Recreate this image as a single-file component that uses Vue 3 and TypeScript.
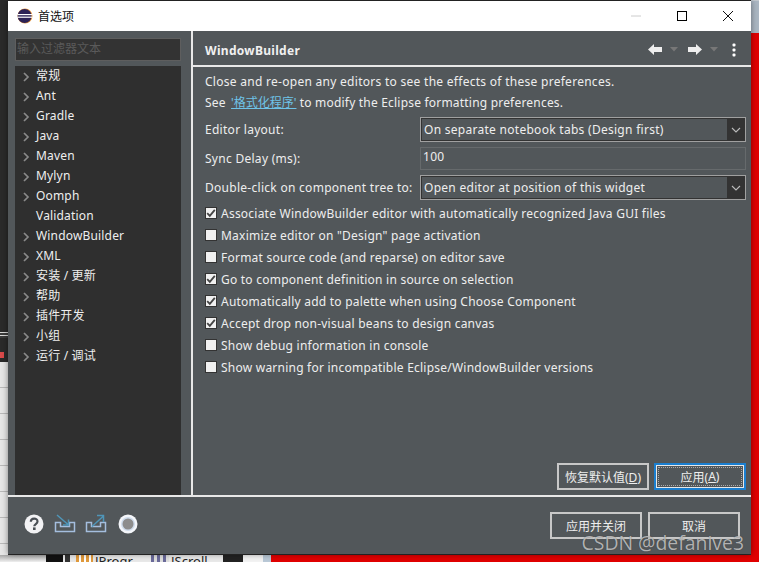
<script setup lang="ts">
const tree: { label: string; arrow: boolean }[] = [
  { label: '常规', arrow: true },
  { label: 'Ant', arrow: true },
  { label: 'Gradle', arrow: true },
  { label: 'Java', arrow: true },
  { label: 'Maven', arrow: true },
  { label: 'Mylyn', arrow: true },
  { label: 'Oomph', arrow: true },
  { label: 'Validation', arrow: false },
  { label: 'WindowBuilder', arrow: true },
  { label: 'XML', arrow: true },
  { label: '安装 / 更新', arrow: true },
  { label: '帮助', arrow: true },
  { label: '插件开发', arrow: true },
  { label: '小组', arrow: true },
  { label: '运行 / 调试', arrow: true },
]
const checks: { label: string; on: boolean }[] = [
  { label: 'Associate WindowBuilder editor with automatically recognized Java GUI files', on: true },
  { label: 'Maximize editor on "Design" page activation', on: false },
  { label: 'Format source code (and reparse) on editor save', on: false },
  { label: 'Go to component definition in source on selection', on: true },
  { label: 'Automatically add to palette when using Choose Component', on: true },
  { label: 'Accept drop non-visual beans to design canvas', on: true },
  { label: 'Show debug information in console', on: false },
  { label: 'Show warning for incompatible Eclipse/WindowBuilder versions', on: false },
]
</script>

<template>
  <div class="desktop">
    <div class="bg-left">
      <div class="bg-dark"></div>
      <div class="bg-rule"></div>
      <div class="bg-rule"></div>
      <div class="bg-dark2"><span class="bg-red"></span></div>
      <div class="bg-list"></div>
    </div>
    <div class="bg-right"></div>
    <div class="bg-bottom">
      <span class="bb-a"></span>
      <span class="bb-b"></span>
      <span class="bb-c"></span>
      <span class="bb-ic orange"></span>
      <span class="bb-t">JProgr</span>
      <span class="bb-ic slate"></span>
      <span class="bb-t second">JScroll</span>
      <span class="bb-d"></span>
      <span class="bb-e"></span>
      <span class="bb-f"></span>
      <span class="bb-red"></span>
    </div>

    <section class="dialog">
      <header class="titlebar">
        <svg class="logo" width="16" height="16" viewBox="0 0 16 16">
          <circle cx="8" cy="8" r="7.5" fill="#e8963c" />
          <circle cx="7.6" cy="8" r="7" fill="#2c2255" />
          <rect x="0.5" y="6" width="15" height="1.2" fill="#fff" />
          <rect x="0.5" y="8.6" width="15" height="1.2" fill="#fff" />
        </svg>
        <span class="title">首选项</span>
        <div class="winbtns">
          <svg width="46" height="30" viewBox="0 0 46 30"><path d="M18 15h10" stroke="#ccc" /></svg>
          <svg width="46" height="30" viewBox="0 0 46 30"><rect x="18.5" y="10.5" width="9" height="9" fill="none" stroke="#000" /></svg>
          <svg width="46" height="30" viewBox="0 0 46 30"><path d="M18 10l10 10M28 10l-10 10" stroke="#111" fill="none" /></svg>
        </div>
      </header>

      <div class="body">
        <aside class="side">
          <div class="filter">输入过滤器文本</div>
          <ul class="tree">
            <li v-for="t in tree" :key="t.label" class="node">
              <svg v-if="t.arrow" class="chev" width="8" height="10" viewBox="0 0 8 10">
                <path d="M2 1l4 4-4 4" fill="none" stroke="#8a8a8a" stroke-width="1.7" />
              </svg>
              <span class="node-label">{{ t.label }}</span>
            </li>
          </ul>
        </aside>

        <main class="main">
          <div class="head">
            <h1 class="heading">WindowBuilder</h1>
            <div class="nav">
              <svg width="14" height="11" viewBox="0 0 14 11"><path d="M0 5.500L6 0V3H14V8H6V11z" fill="#eee" /></svg>
              <svg class="caret" width="8" height="5" viewBox="0 0 8 5"><path d="M0 0h8L4 4.500z" fill="#777" /></svg>
              <svg class="fwd" width="14" height="11" viewBox="0 0 14 11"><path d="M14 5.500L8 0V3H0V8H8V11z" fill="#eee" /></svg>
              <svg class="caret" width="8" height="5" viewBox="0 0 8 5"><path d="M0 0h8L4 4.500z" fill="#777" /></svg>
              <svg class="dots" width="4" height="14" viewBox="0 0 4 14">
                <rect x="0.500" y="0.500" width="3" height="3" rx="1" fill="#fff" />
                <rect x="0.500" y="5.500" width="3" height="3" rx="1" fill="#fff" />
                <rect x="0.500" y="10.500" width="3" height="3" rx="1" fill="#fff" />
              </svg>
            </div>
          </div>

          <div class="content">
            <p class="line">Close and re-open any editors to see the effects of these preferences.</p>
            <p class="line l2">See <a class="link">'格式化程序'</a> to modify the Eclipse formatting preferences.</p>

            <div class="form">
              <label class="flabel">Editor layout:</label>
              <div class="combo"><span class="combo-text">On separate notebook tabs (Design first)</span><span class="combo-btn"><svg width="10" height="6" viewBox="0 0 10 6"><path d="M1 1l4 4 4-4" fill="none" stroke="#bbb" stroke-width="1.100" /></svg></span></div>
              <label class="flabel short">Sync Delay (ms):</label>
              <div class="field">100</div>
              <label class="flabel">Double-click on component tree to:</label>
              <div class="combo"><span class="combo-text">Open editor at position of this widget</span><span class="combo-btn"><svg width="10" height="6" viewBox="0 0 10 6"><path d="M1 1l4 4 4-4" fill="none" stroke="#bbb" stroke-width="1.100" /></svg></span></div>
            </div>

            <ul class="checks">
              <li v-for="c in checks" :key="c.label" class="check">
                <span class="box">
                  <svg v-if="c.on" width="12" height="12" viewBox="0 0 12 12"><path d="M2.200 6.200l2.600 2.600 5-6" fill="none" stroke="#444" stroke-width="1.800" /></svg>
                </span>
                <span>{{ c.label }}</span>
              </li>
            </ul>

            <div class="actions">
              <button class="btn">恢复默认值(<u>D</u>)</button>
              <button class="btn primary"><span class="focus">应用(<u>A</u>)</span></button>
            </div>
          </div>
        </main>
      </div>

      <footer class="footer">
        <div class="tools">
          <svg width="20" height="20" viewBox="0 0 20 20">
            <circle cx="10" cy="10" r="9.500" fill="#f2f2f4" />
            <path d="M6.800 7.800c0-4.300 6.700-4.300 6.700-.3 0 2.600-3.200 2.500-3.200 4.700" fill="none" stroke="#4a4f55" stroke-width="2.200" />
            <rect x="9" y="13.400" width="2.600" height="2.600" fill="#4a4f55" />
          </svg>
          <svg class="imp" width="22" height="20" viewBox="0 0 22 20">
            <path d="M1.500 8.500v9h19v-9h-5v4h-9v-4z" fill="none" stroke="#a5bede" stroke-width="1.500" />
            <path d="M3 1l11 9.500M14.500 5.500v5.500H9" fill="none" stroke="#4f95b8" stroke-width="1.500" />
          </svg>
          <svg class="exp" width="22" height="20" viewBox="0 0 22 20">
            <path d="M1.500 8.500v9h19v-9h-5v4h-9v-4z" fill="none" stroke="#a5bede" stroke-width="1.500" />
            <path d="M7 12.500L18 2.500M12 1.500h6.500V8" fill="none" stroke="#4f95b8" stroke-width="1.500" />
          </svg>
          <svg class="rec" width="20" height="20" viewBox="0 0 20 20">
            <circle cx="10" cy="10" r="9.500" fill="#f4f6fa" />
            <circle cx="10" cy="10" r="7" fill="#cfdcec" />
            <circle cx="10" cy="10" r="5.500" fill="#8d8d8d" />
          </svg>
        </div>
        <div class="foot-btns">
          <button class="btn">应用并关闭</button>
          <button class="btn">取消</button>
        </div>
      </footer>
    </section>

    <div class="mark">CSDN @defanive3</div>
  </div>
</template>

<style>
html, body { margin: 0; padding: 0; overflow: hidden; }
</style>

<style scoped>
* { box-sizing: border-box; }
.desktop {
  position: relative;
  width: 759px;
  height: 562px;
  overflow: hidden;
  background: #2b2b2b;
  font-family: "Noto Sans", "Noto Sans CJK SC", sans-serif;
  font-size: 12px;
  color: #eeeeee;
}
.bg-left { position: absolute; left: 0; top: 0; width: 8px; height: 555px; display: flex; flex-direction: column; }
.bg-dark { height: 332px; background: #2a2a2a; }
.bg-rule { height: 3px; border-top: 1px solid #d8d8d8; background: #3a3a3a; }
.bg-dark2 { height: 24px; background: #2a2a2a; position: relative; }
.bg-red { position: absolute; left: 0; top: 14px; width: 4px; height: 6px; background: #d94a4a; }
.bg-list {
  flex: 1;
  background: repeating-linear-gradient(#e6e6e6 0, #e6e6e6 25px, #b9b9b9 25px, #b9b9b9 26px);
}
.bg-right {
  position: absolute; right: 0; top: 0; width: 8px; height: 555px;
  background: linear-gradient(#dcdcdc 0, #aab6c2 1px, #aab6c2 33px, #e00000 33px);
}
.bg-bottom {
  position: absolute; left: 0; right: 0; bottom: 0; height: 7px;
  display: flex; align-items: flex-start; background: #e8e8e8;
  color: #222; font-size: 13px; line-height: 14px; overflow: hidden;
}
.bb-a { width: 46px; height: 7px; background: linear-gradient(#a8a8a8, #efefef); }
.bb-b { width: 17px; height: 7px; background: #111; }
.bb-c { width: 5px; height: 7px; margin-left: 2px; background: #333; }
.bb-ic { width: 17px; height: 7px; margin-left: 6px; flex: none; }
.orange { background: repeating-linear-gradient(90deg, #e09a3c 0, #e09a3c 3px, #fff 3px, #fff 5px); }
.slate { width: 18px; margin-left: 20px; background: repeating-linear-gradient(90deg, #6a6a9a 0, #6a6a9a 3px, #ddd 3px, #ddd 6px); }
.bb-t { margin-top: -1px; margin-left: 2px; width: 36px; }
.bb-t.second { width: 36px; }
.bb-d { width: 20px; height: 7px; margin-left: 16px; background: #222; }
.bb-e { width: 20px; height: 7px; background: #f2f2f2; }
.bb-f { width: 8px; height: 7px; background: #b9c8d6; }
.bb-red { flex: 1; height: 7px; background: #e00000; }

.dialog {
  position: absolute; left: 8px; top: 1px; width: 743px; height: 553px;
  display: flex; flex-direction: column; background: #52575a;
  box-shadow: 0 0 6px rgba(0, 0, 0, 0.45);
}
.titlebar {
  height: 30px; flex: none; background: #fff; display: flex; align-items: center;
  padding-left: 9px; color: #111;
}
.logo { flex: none; }
.title { margin-left: 5px; font-size: 12px; }
.winbtns { margin-left: auto; display: flex; }
.winbtns svg { display: block; }

.body { flex: 1; display: flex; min-height: 0; border-bottom: 2px solid #e8e8e8; }
.side { width: 185px; flex: none; padding: 7px 0 0 7px; border-right: 2px solid #e8e8e8; display: flex; flex-direction: column; }
.filter {
  width: 166px; height: 23px; background: #333; border: 1px solid #5e5e5e;
  color: #5a5a5a; line-height: 20px; padding-left: 1px; flex: none;
}
.tree { list-style: none; margin: 5px 0 0; padding: 0; width: 166px; flex: 1; background: #2f2f2f; letter-spacing: 0.17px; }
.node { height: 20px; position: relative; padding-left: 21px; line-height: 20px; }
.chev { position: absolute; left: 7px; top: 6px; }

.main { flex: 1; min-width: 0; display: flex; flex-direction: column; }
.head { height: 36px; flex: none; display: flex; align-items: center; padding: 3px 15px 0 12px; border-bottom: 2px solid #e8e8e8; }
.heading { margin: 2px 0 0; font-size: 12px; font-weight: 700; color: #f0f0f0; letter-spacing: 0.3px; }
.nav { margin-left: auto; display: flex; align-items: center; }
.caret { margin-left: 8px; }
.fwd { margin-left: 10px; }
.dots { margin-left: 14px; }

.content { flex: 1; display: flex; flex-direction: column; padding: 4px 5px 5px 12px; position: relative; letter-spacing: 0.28px; }
.line { margin: 0; height: 22px; line-height: 22px; white-space: nowrap; }
.l2 { height: 20px; line-height: 20px; letter-spacing: 0.2px; }
.link { color: #6fc3e8; text-decoration: underline; letter-spacing: 0; margin-left: 2px; }
.form { display: grid; grid-template-columns: 215px 326px; grid-template-rows: 25px 23px 25px; row-gap: 5px; margin-top: 4px; }
.form .flabel { line-height: 25px; white-space: nowrap; }
.form .short { line-height: 23px; }
.combo { display: flex; border: 1px solid #a0a0a0; background: #52575a; box-shadow: inset 0 0 0 1px #333; }
.combo-text { flex: 1; padding-left: 3px; line-height: 23px; }
.combo-btn { width: 18px; background: #333; display: flex; align-items: center; justify-content: center; }
.field { border: 1px solid #666a6c; padding-left: 2px; line-height: 18px; background: #52575a; }
.checks { list-style: none; margin: 2px 0 0; padding: 0; letter-spacing: 0.23px; }
.check { height: 22px; display: flex; align-items: center; gap: 4px; white-space: nowrap; }
.box { width: 12px; height: 12px; flex: none; background: #f0f0f0; border: 1px solid #333; display: flex; align-items: center; justify-content: center; }
.box svg { margin: -1px; flex: none; }
.actions { margin-top: auto; display: flex; justify-content: flex-end; gap: 5px; letter-spacing: 0; }
.btn {
  width: 92px; height: 27px; padding: 0; background: #52575a; color: #eee;
  border: 2px solid #c8c8c8; font: inherit; display: block;
}
.btn.primary { border-color: #1b7fd0; box-shadow: inset 0 0 0 1px #e8e8e8; padding: 2px; }
.focus { display: flex; width: 100%; height: 100%; align-items: center; justify-content: center; border: 1px dotted #aaa; }

.footer { height: 57px; flex: none; display: flex; align-items: center; padding: 0 11px 0 16px; }
.tools { display: flex; align-items: center; margin-bottom: 4px; }
.imp { margin-left: 10px; }
.exp { margin-left: 9px; }
.rec { margin-left: 11px; }
.foot-btns { margin-left: auto; display: flex; gap: 6px; }

.mark {
  position: absolute; right: 15px; bottom: 8px; font-family: "Open Sans", sans-serif; font-size: 19.4px; line-height: 22px;
  color: rgba(200, 200, 200, 0.85); text-shadow: 0 0 1px rgba(0,0,0,0.4);
}
</style>
